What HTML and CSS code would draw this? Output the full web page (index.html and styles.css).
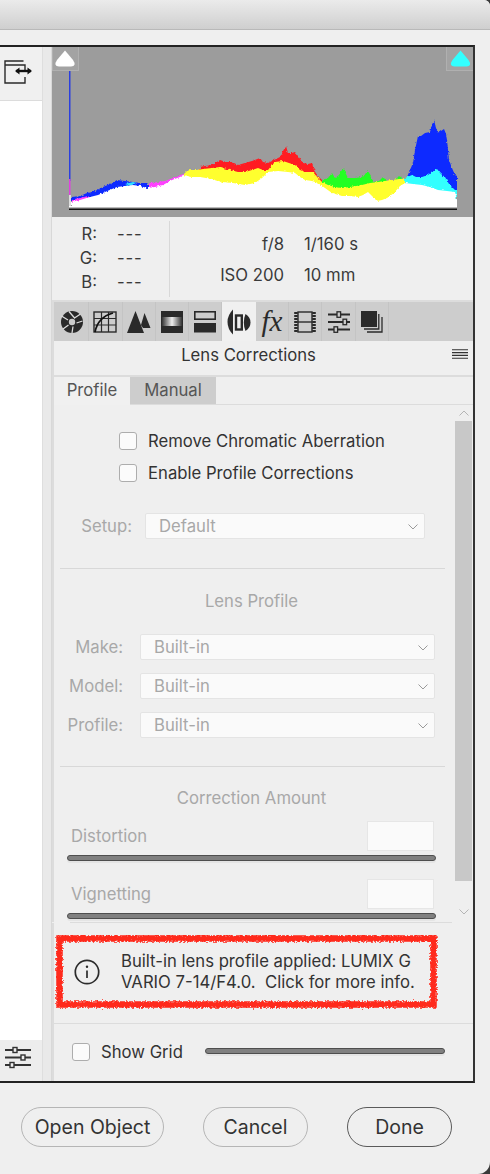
FILE: index.html
```html
<!DOCTYPE html>
<html lang="en">
<head>
<meta charset="utf-8">
<title>Lens Corrections</title>
<link rel="stylesheet" href="styles.css">
</head>
<body>
<div class="window">
  <div class="titlebar"></div>
  <div class="frame">
    <div class="leftcol">
      <div class="lefttool">
        <svg class="i-toggle" viewBox="0 0 30 26" width="30" height="26"><path d="M21.500 3H3v22h20V19M3 7h20v6" fill="none" stroke="#2a2a2a" stroke-width="1.400"/><path d="M14 13h15" stroke="#111" stroke-width="2.400"/><path d="M13 13l4.500-3.600v7.200zM30 13l-4.500-3.600v7.200z" fill="#111"/></svg>
      </div>
      <div class="leftbody"></div>
      <div class="leftfoot">
        <svg viewBox="0 0 26 24" width="26" height="24"><g stroke="#333" stroke-width="2.200"><path d="M0 4h26M0 11.500h26M0 19h26"/></g><g fill="#eee" stroke="#333" stroke-width="1.400"><rect x="8" y="1.500" width="4" height="5"/><rect x="16" y="9" width="4" height="5"/><rect x="5" y="16.500" width="4" height="5"/></g></svg>
      </div>
    </div>
    <div class="strip"></div>
    <div class="panel">
      <svg class="hist" viewBox="52 47 421 170" width="421" height="170">
        <defs><filter id="jag" x="-2%" y="-5%" width="104%" height="110%"><feTurbulence type="fractalNoise" baseFrequency="0.45" numOctaves="2" seed="7"/><feDisplacementMap in="SourceGraphic" scale="3" xChannelSelector="R" yChannelSelector="G"/></filter></defs>
        <rect x="52" y="47" width="421" height="170" fill="#9c9c9c"/>
        <rect x="52.500" y="46" width="26" height="24.500" fill="#a3a3a3" stroke="#b0b0b0"/>
        <rect x="446.500" y="46" width="27" height="24.500" fill="#a3a3a3" stroke="#b0b0b0"/>
        <path d="M65 50.500L73 60Q77 66 71 66.500H59Q53 66 57 60Z" fill="#fff"/>
        <path d="M460.500 50.500L468.500 60Q472.500 66 466.500 66.500H454.500Q448.500 66 452.500 60Z" fill="#33ffff"/>
        <rect x="69" y="71" width="1.500" height="110" fill="#2b3fe0"/>
        <rect x="69" y="179" width="1.500" height="16" fill="#e040e0"/>
        <rect x="69" y="195" width="2" height="12" fill="#ddd"/>
        <g filter="url(#jag)">
        <polygon fill="#0f2bff" points="407,207 407,177 410,170 413,163 415,150 418,136 421,136 425,133 430,132 432,125 434,120 436,128 438,133 441,131 444,129 446,134 447,140 449,160 452,168 455,175 457,176 457,207"/>
        <polygon fill="#33ffff" points="405,207 405,178 412,175 416,177 422,177 428,175 432,172 437,169 441,174 445,177 449,184 455,190 457,190 457,207"/>
        <polygon fill="#ff1a22" points="200,175 200,167 205,166 212,165 220,160 226,162 232,162 238,165 245,163 252,161 260,158 263,162 268,163 274,160 280,157 283,151 286,146 288,153 292,153 295,152 298,156 303,163 308,164 312,163 314,170 317,175 322,180 322,190 200,190"/>
        <polygon fill="#22ff22" points="322,180 328,178 332,173 335,178 339,175 343,168 346,174 348,178 355,178 363,177 366,173 368,171 371,176 373,182 379,181 383,177 386,180 388,182 394,181 399,176 404,179 404,200 322,200"/>
        <polygon fill="#ffff2e" points="183,175 187,171 190,170 197,170 203,169 212,168 220,167 230,170 238,172 245,172 252,170 258,168 263,170 268,170 272,165 275,162 283,161 289,163 295,165 300,170 305,172 313,172 318,178 322,182 328,185 335,187 342,188 350,187 362,185 370,183 378,182 385,181 392,180 399,179 405,178 405,205 183,205"/>
        <polygon fill="#ff40ff" points="147,186 150,183 157,182 165,181 173,178 180,175 184,174 184,190 147,190 125,190"/>
        <polygon fill="#0f2bff" points="71,197 72,197 80,196 87,193 95,191 103,187 110,184 117,180 125,181 133,182 140,183 147,183 150,186 147,190 125,190 110,192 95,198 80,205 71,205"/>
        <polygon fill="#33e0ff" points="125,184 133,182 136,183 130,186"/>
        <polygon fill="#ff40ff" points="72,200 80,198 88,196 90,198 80,203 72,204"/>
        <polygon fill="#fff" points="71,207 71,202 80,200 90,197 98,195 105,192 112,189 117,187 125,186 133,185 140,186 147,188 155,187 163,185 172,180 180,177 183,175 192,177 200,177 212,179 222,182 233,183 245,185 255,183 262,178 268,172 278,171 288,172 295,173 300,177 305,180 312,181 318,183 325,188 332,193 342,196 350,196 358,197 363,195 368,192 372,196 377,201 382,200 387,198 394,193 400,186 405,183 413,184 422,185 430,187 438,190 447,191 455,192 457,200 457,207"/>
        </g>
        <rect x="69" y="206" width="388" height="2" fill="#fff"/>
        <rect x="69" y="207" width="388" height="1.500" fill="#bbb"/>
        <rect x="69" y="208.500" width="388" height="1.500" fill="#111"/>
      </svg>

      <div class="info">
        <div class="rgb">
          <div class="rgb-row"><span class="rgb-k">R:</span><span class="dash">---</span></div>
          <div class="rgb-row"><span class="rgb-k">G:</span><span class="dash">---</span></div>
          <div class="rgb-row"><span class="rgb-k">B:</span><span class="dash">---</span></div>
        </div>
        <div class="exif">
          <div class="exif-row"><span class="exif-a">f/8</span><span>1/160 s</span></div>
          <div class="exif-row"><span class="exif-a">ISO 200</span><span>10 mm</span></div>
        </div>
      </div>

      <div class="icontabs">
        <div class="itab"><svg viewBox="0 0 24 24" width="24" height="24"><circle cx="12" cy="12" r="11" fill="#2a2a2a"/><g stroke="#ddd" stroke-width="1.300" fill="none"><path d="M15 8.500L9 1.500M8 10l-6.500-4M8.500 15L3 19M13 16.500L12 23M16.500 13l6-2M14.500 8L20.500 4"/><circle cx="12" cy="12" r="3.200" fill="#ccc" stroke="none"/></g></svg></div>
        <div class="itab"><svg viewBox="0 0 24 22" width="24" height="22"><rect x="1" y="1" width="22" height="20" fill="#ccc" stroke="#2a2a2a" stroke-width="1.400"/><path d="M1 7.500h22M1 14h22M8.500 1v20M15.500 1v20" stroke="#2a2a2a" stroke-width="1.200"/><path d="M2 21Q5 6 20 2" fill="none" stroke="#111" stroke-width="1.800"/></svg></div>
        <div class="itab"><svg viewBox="0 0 24 24" width="24" height="24"><path d="M0 23L8.500 1 17 23zM14 15L17.500 3 23.500 18H16z" fill="#2a2a2a"/></svg></div>
        <div class="itab"><svg viewBox="0 0 22 22" width="22" height="22"><defs><linearGradient id="g1"><stop offset="0" stop-color="#222"/><stop offset=".5" stop-color="#eee"/><stop offset="1" stop-color="#222"/></linearGradient></defs><rect width="22" height="6" fill="#2a2a2a"/><rect y="6" width="22" height="9" fill="url(#g1)"/><rect y="15" width="22" height="7" fill="#2a2a2a"/></svg></div>
        <div class="itab"><svg viewBox="0 0 22 22" width="22" height="22"><rect x=".8" y=".8" width="20.400" height="7.400" fill="none" stroke="#2a2a2a" stroke-width="1.600"/><rect y="12" width="22" height="9.500" fill="#2a2a2a"/></svg></div>
        <div class="itab itab-on"><svg viewBox="0 0 24 26" width="24" height="26"><g fill="#2a2a2a"><path d="M6 .5Q.5 6 .5 13T6 25.500z"/><path d="M18.500 5Q23.500 8 23.500 13.500T18.500 22Q16.800 18 16.800 13.500T18.500 5z"/></g><rect x="9" y="6.500" width="5.800" height="14" fill="none" stroke="#2a2a2a" stroke-width="2.400"/></svg></div>
        <div class="itab"><span class="fx">fx</span></div>
        <div class="itab"><svg viewBox="0 0 22 22" width="22" height="22"><rect x="4" y="1" width="14" height="20" fill="none" stroke="#2a2a2a" stroke-width="1.400"/><path d="M4 11h14" stroke="#2a2a2a" stroke-width="1.400"/><path d="M2 1v20M20 1v20" stroke="#2a2a2a" stroke-width="3.600" stroke-dasharray="2 1"/></svg></div>
        <div class="itab"><svg viewBox="0 0 22 22" width="22" height="22"><path d="M0 3.500h22M0 11h22M0 18.500h22" stroke="#2a2a2a" stroke-width="2"/><g fill="#ccc" stroke="#2a2a2a" stroke-width="1.300"><rect x="9" y=".8" width="3.600" height="5.500"/><rect x="15" y="8.200" width="3.600" height="5.500"/><rect x="6" y="15.800" width="3.600" height="5.500"/></g></svg></div>
        <div class="itab"><svg viewBox="0 0 22 22" width="22" height="22"><rect x="0" y="0" width="16" height="16" fill="#2a2a2a"/><path d="M17.800 3v15H3M21 6v15H6" fill="none" stroke="#2a2a2a" stroke-width="1.300"/></svg></div>
      </div>

      <div class="paneltitle">
        <span>Lens Corrections</span>
        <svg class="menu" viewBox="0 0 16 10" width="16" height="10"><path d="M0 .75h16M0 3.600h16M0 6.400h16M0 9.250h16" stroke="#333" stroke-width="1.200"/></svg>
      </div>

      <div class="subtabs">
        <div class="subtab subtab-on">Profile</div>
        <div class="subtab">Manual</div>
      </div>

      <div class="scroller">
        <div class="content">
          <div class="checks">
            <label class="check"><span class="box"></span>Remove Chromatic Aberration</label>
            <label class="check"><span class="box"></span>Enable Profile Corrections</label>
          </div>
          <div class="field field-setup"><span class="flabel flabel-setup">Setup:</span><span class="select select-setup">Default<svg class="chev" viewBox="0 0 10 6" width="10" height="6"><path d="M.5.5L5 5 9.500.5" fill="none" stroke="#9a9a9a" stroke-width="1"/></svg></span></div>
          <div class="rule rule-a"></div>
          <div class="heading heading-lens">Lens Profile</div>
          <div class="field field-first"><span class="flabel">Make:</span><span class="select">Built-in<svg class="chev" viewBox="0 0 10 6" width="10" height="6"><path d="M.5.5L5 5 9.500.5" fill="none" stroke="#9a9a9a" stroke-width="1"/></svg></span></div>
          <div class="field"><span class="flabel">Model:</span><span class="select">Built-in<svg class="chev" viewBox="0 0 10 6" width="10" height="6"><path d="M.5.5L5 5 9.500.5" fill="none" stroke="#9a9a9a" stroke-width="1"/></svg></span></div>
          <div class="field"><span class="flabel">Profile:</span><span class="select">Built-in<svg class="chev" viewBox="0 0 10 6" width="10" height="6"><path d="M.5.5L5 5 9.500.5" fill="none" stroke="#9a9a9a" stroke-width="1"/></svg></span></div>
          <div class="rule rule-b"></div>
          <div class="heading heading-corr">Correction Amount</div>
          <div class="amount amount-first"><span>Distortion</span><span class="numbox"></span></div>
          <div class="slider slider-long"></div>
          <div class="amount amount-second"><span>Vignetting</span><span class="numbox"></span></div>
          <div class="slider slider-long"></div>
        </div>
        <div class="scrollbar">
          <svg class="sc-arrow" viewBox="0 0 10 6" width="10" height="6"><path d="M.5 5.500L5 1l4.500 4.500" fill="none" stroke="#b5b5b5"/></svg>
          <div class="thumb"></div>
          <svg class="sc-arrow" viewBox="0 0 10 6" width="10" height="6"><path d="M.5.5L5 5l4.500-4.500" fill="none" stroke="#b5b5b5"/></svg>
        </div>
      </div>
      <div class="endrule"></div>

      <div class="callout">
        <svg class="i-info" viewBox="0 0 26 26" width="26" height="26"><circle cx="13" cy="13" r="11.700" fill="none" stroke="#2b2b2b" stroke-width="1.700"/><path d="M13 11.500V19" stroke="#2b2b2b" stroke-width="1.700"/><circle cx="13" cy="7.800" r="1.200" fill="#2b2b2b"/></svg>
        <div class="calltext">Built-in lens profile applied: LUMIX G<br>VARIO 7-14/F4.0.&nbsp; Click for more info.</div>
        <svg class="scribble" viewBox="0 0 384 76" width="384" height="76"><defs><filter id="rough" x="-5%" y="-15%" width="110%" height="130%"><feTurbulence type="fractalNoise" baseFrequency="0.55" numOctaves="2" seed="4"/><feDisplacementMap in="SourceGraphic" scale="5" xChannelSelector="R" yChannelSelector="G"/></filter></defs><rect x="4.500" y="3.500" width="374" height="66" fill="none" stroke="#ff2a1e" stroke-width="6.500" filter="url(#rough)"/></svg>
      </div>

      <div class="gridrow">
        <label class="check check-grid"><span class="box"></span>Show Grid</label>
        <div class="slider slider-grid"></div>
      </div>
    </div>
  </div>
  <div class="actions">
    <button class="btn btn-open">Open Object</button>
    <button class="btn btn-cancel">Cancel</button>
    <button class="btn btn-done">Done</button>
  </div>
</div>
</body>
</html>
```
FILE: styles.css
```css
* { box-sizing: border-box; }
html, body { margin: 0; padding: 0; }
body {
  width: 490px;
  height: 1174px;
  overflow: hidden;
  background: #3a3a3a;
  font-family: Inter, "Liberation Sans", Arial, sans-serif;
  font-size: 16.7px;
  color: #333;
}
.window {
  height: 1174px;
  background: #efefef;
  border-radius: 0 6px 12px 0;
  overflow: hidden;
}
.titlebar {
  height: 30px;
  background: linear-gradient(#ebebeb, #cfcfcf);
  border-bottom: 1px solid #b9b9b9;
  margin-bottom: 15px;
}
.frame {
  display: flex;
  width: 475px;
  height: 1038px;
  border-top: 2px solid #222;
  border-right: 2px solid #333;
  border-bottom: 2px solid #222;
}
.leftcol { width: 42px; display: flex; flex-direction: column; }
.lefttool { height: 54px; background: #f0f0f0; border-bottom: 1px solid #dcdcdc; padding: 11px 0 0 2px; }
.leftbody { flex: 1; background: #fff; }
.leftfoot { height: 41px; background: #ededed; padding: 6px 0 0 5px; }
.strip { width: 10px; background: #e9e9e9; border-left: 1px solid #dedede; border-right: 1px solid #d8d8d8; }
.panel { width: 421px; display: flex; flex-direction: column; }
.hist { display: block; flex: none; }

.info { height: 85px; display: flex; padding-top: 5px; border-bottom: 2px solid #dcdcdc; }
.rgb { width: 118px; height: 76px; margin-top: -1px; padding-top: 1px; border-right: 1px solid #d8d8d8; color: #3a3a3a; }
.rgb-row { display: flex; height: 24px; align-items: center; }
.rgb-k { width: 45px; margin-right: 20px; text-align: right; }
.dash { letter-spacing: .8px; }
.exif { padding-top: 6px; color: #3a3a3a; }
.exif-row { display: flex; height: 31px; align-items: center; }
.exif-a { width: 114px; margin-right: 20px; text-align: right; }

.icontabs { flex: none; height: 39px; display: flex; background: #cdcdcd; padding-left: 2px; border-left: 2px solid #dcdcdc; }
.itab { width: 33.3px; display: flex; align-items: center; justify-content: center; border-right: 1px solid #c4c4c4; }
.itab-on { background: #f0f0f0; border-right: 0; }
.fx { font-family: "Liberation Serif", serif; font-style: italic; font-size: 29px; color: #2a2a2a; line-height: 1; }

.paneltitle { flex: none; height: 36px; position: relative; display: flex; align-items: center; justify-content: center; padding: 0 30px 6px 0; border-bottom: 2px solid #dcdcdc; border-left: 2px solid #dcdcdc; color: #333; }
.menu { position: absolute; right: 5px; top: 8px; }

.subtabs { flex: none; height: 28px; display: flex; border-bottom: 1px solid #dcdcdc; border-left: 2px solid #dcdcdc; color: #555; }
.subtab { width: 86px; background: #cdcdcd; text-align: center; line-height: 27px; }
.subtab-on { width: 76px; background: #f0f0f0; margin-bottom: -1px; }

.scroller { flex: none; height: 517px; display: flex; border-left: 2px solid #dcdcdc; }
.content { width: 401px; }
.scrollbar { width: 17px; display: flex; flex-direction: column; align-items: center; }
.sc-arrow { display: block; flex: none; }
.scrollbar .sc-arrow:first-child { margin: 5px 0 5px; }
.thumb { width: 17px; height: 460px; background: #c8c8c8; margin-bottom: 28px; }

.checks { padding: 27px 0 0 65px; }
.check { display: flex; align-items: center; height: 18px; margin-bottom: 14px; color: #333; }
.box { width: 18px; height: 18px; margin-right: 11px; background: #fbfbfb; border: 1.500px solid #adadad; border-radius: 3px; flex: none; }

.field { display: flex; align-items: center; height: 26px; margin-bottom: 13px; margin-left: 0; color: #a8a8a8; }
.field-setup { margin-top: 31px; }
.flabel { width: 69px; text-align: right; margin-right: 17px; }
.flabel-setup { width: 78px; margin-right: 13px; }
.select { position: relative; width: 295px; height: 26px; line-height: 25px; padding-left: 13px; background: #fafafa; border: 1px solid #e4e4e4; border-radius: 2px; }
.select-setup { width: 280px; }
.chev { position: absolute; right: 6px; top: 10px; }
.rule { height: 1px; background: #d8d8d8; margin: 0 8px 0 6px; }
.rule-a { width: 385px; margin-top: 29px; }
.rule-b { width: 385px; margin-top: 28px; }
.heading { text-align: center; color: #a8a8a8; padding-right: 6px; line-height: 20px; }
.heading-lens { margin-top: 22px; }
.heading-corr { margin-top: 21px; }
.field-first { margin-top: 23px; }
.amount { display: flex; justify-content: space-between; align-items: center; height: 30px; margin-left: 17px; width: 363px; color: #a8a8a8; }
.amount-first { margin-top: 13px; }
.amount-second { margin-top: 18px; }
.numbox { width: 67px; height: 30px; background: #fafafa; border: 1px solid #e6e6e6; }
.slider { height: 6px; border-radius: 3px; background: #808080; border: 1px solid #4e4e4e; box-shadow: 0 2px 0 #e4e4e4; }
.slider-long { width: 369px; margin: 4px 0 0 13px; }
.endrule { height: 1px; width: 382px; margin-left: 18px; background: #dcdcdc; flex: none; }

.callout { flex: none; height: 101px; position: relative; display: flex; border-left: 2px solid #dcdcdc; border-bottom: 1px solid #dcdcdc; }
.i-info { position: absolute; left: 20px; top: 36px; }
.calltext { margin: 28px 0 0 67px; line-height: 21px; color: #333; white-space: nowrap; }
.scribble { position: absolute; left: 1px; top: 12px; }

.gridrow { flex: 1; display: flex; align-items: flex-start; padding: 19px 0 0 18px; border-left: 2px solid #dcdcdc; }
.check-grid { width: 133px; margin: 0; }
.slider-grid { width: 240px; margin-top: 5px; }

.actions { display: flex; padding: 24px 0 0 21px; }
.btn { height: 40px; padding: 0; background: #efefef; border: 1.500px solid #b5b5b5; border-radius: 21px; font: 19.5px Inter, "Liberation Sans", Arial, sans-serif; color: #333; }
.btn-open { width: 143px; margin-right: 39px; }
.btn-cancel { width: 105px; margin-right: 39px; }
.btn-done { width: 105px; border-color: #5a5a5a; }
```
